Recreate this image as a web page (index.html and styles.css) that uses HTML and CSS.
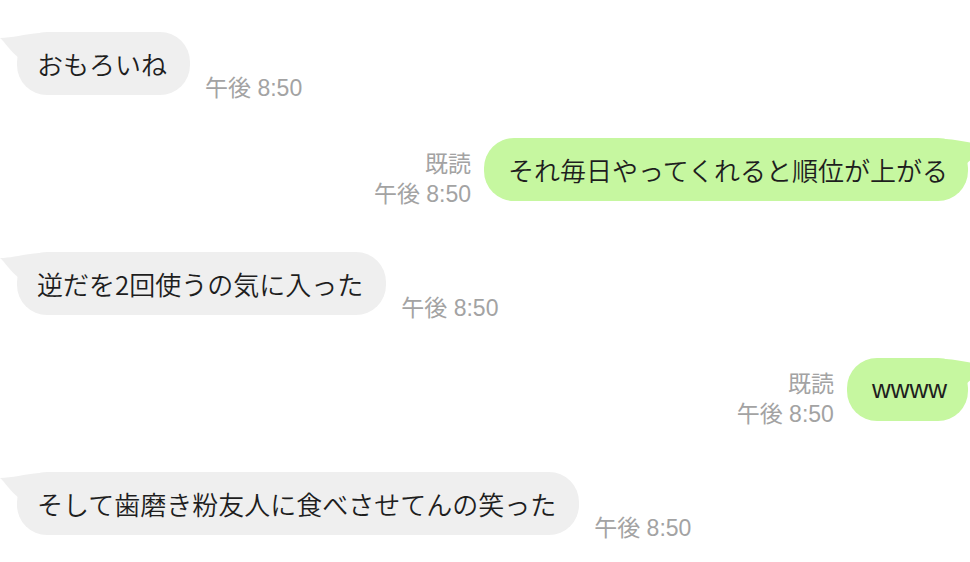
FILE: index.html
```html
<!DOCTYPE html>
<html lang="ja">
<head>
<meta charset="utf-8">
<link rel="stylesheet" href="styles.css">
</head>
<body>
<div class="chat">
  <div class="row in">
    <div class="bubble">
      <svg class="tail" width="40" height="32" viewBox="0 0 40 32"><path d="M0 6 C12 6 24 2 40 1 L40 32 L22 32 L22 28 C12 22 5 10 0 6 Z" fill="#efefef"/></svg>
      <span class="txt">おもろいね</span>
    </div>
    <div class="meta"><span class="time">午後 8:50</span></div>
  </div>
  <div class="row out">
    <div class="meta"><span class="read">既読</span><span class="time">午後 8:50</span></div>
    <div class="bubble">
      <svg class="tail" width="40" height="32" viewBox="0 0 40 32"><path d="M40 6 C28 6 16 2 0 1 L0 32 L18 32 L18 28 C28 22 35 10 40 6 Z" fill="#c6f7a0"/></svg>
      <span class="txt">それ毎日やってくれると順位が上がる</span>
    </div>
  </div>
  <div class="row in">
    <div class="bubble">
      <svg class="tail" width="40" height="32" viewBox="0 0 40 32"><path d="M0 6 C12 6 24 2 40 1 L40 32 L22 32 L22 28 C12 22 5 10 0 6 Z" fill="#efefef"/></svg>
      <span class="txt">逆だを2回使うの気に入った</span>
    </div>
    <div class="meta"><span class="time">午後 8:50</span></div>
  </div>
  <div class="row out">
    <div class="meta"><span class="read">既読</span><span class="time">午後 8:50</span></div>
    <div class="bubble latin">
      <svg class="tail" width="40" height="32" viewBox="0 0 40 32"><path d="M40 6 C28 6 16 2 0 1 L0 32 L18 32 L18 28 C28 22 35 10 40 6 Z" fill="#c6f7a0"/></svg>
      <span class="txt">wwww</span>
    </div>
  </div>
  <div class="row in">
    <div class="bubble">
      <svg class="tail" width="40" height="32" viewBox="0 0 40 32"><path d="M0 6 C12 6 24 2 40 1 L40 32 L22 32 L22 28 C12 22 5 10 0 6 Z" fill="#efefef"/></svg>
      <span class="txt">そして歯磨き粉友人に食べさせてんの笑った</span>
    </div>
    <div class="meta"><span class="time">午後 8:50</span></div>
  </div>
</div>
</body>
</html>
```
FILE: styles.css
```css
html, body {
  margin: 0;
  padding: 0;
  background: #ffffff;
}
body {
  width: 970px;
  height: 562px;
  overflow: hidden;
  font-family: "Noto Sans CJK JP", sans-serif;
}
.chat {
  display: flex;
  flex-direction: column;
  padding-top: 32px;
}
.row {
  display: flex;
  align-items: flex-end;
}
.row.in {
  padding-left: 17px;
}
.row.out {
  justify-content: flex-end;
  padding-right: 2px;
}
.row.in + .row.out {
  margin-top: 43px;
}
.row.out + .row.in {
  margin-top: 51px;
}
.bubble {
  position: relative;
  height: 63px;
  box-sizing: border-box;
  border-radius: 30px;
  font-size: 26px;
  font-weight: 350;
  line-height: 63px;
  color: #1e1e1e;
  white-space: nowrap;
}
.txt {
  position: relative;
}
.in .bubble {
  background: #efefef;
  padding: 0 23px 0 20px;
}
.out .bubble {
  background: #c6f7a0;
  padding: 0 20px 0 24px;
}
.bubble.latin {
  font-family: "Liberation Sans", sans-serif;
  font-weight: 400;
  padding-left: 25px;
  padding-right: 21px;
}
.tail {
  position: absolute;
  top: 0;
}
.in .tail {
  left: -17px;
}
.out .tail {
  right: -17px;
}
.meta {
  display: flex;
  flex-direction: column;
  font-family: "Liberation Sans", "Noto Sans CJK JP", sans-serif;
  font-size: 23px;
  line-height: 30px;
  color: #a3a3a3;
  margin-bottom: -8px;
}
.in .meta {
  margin-left: 15px;
  align-items: flex-start;
}
.out .meta {
  margin-right: 13px;
  align-items: flex-end;
}
```
